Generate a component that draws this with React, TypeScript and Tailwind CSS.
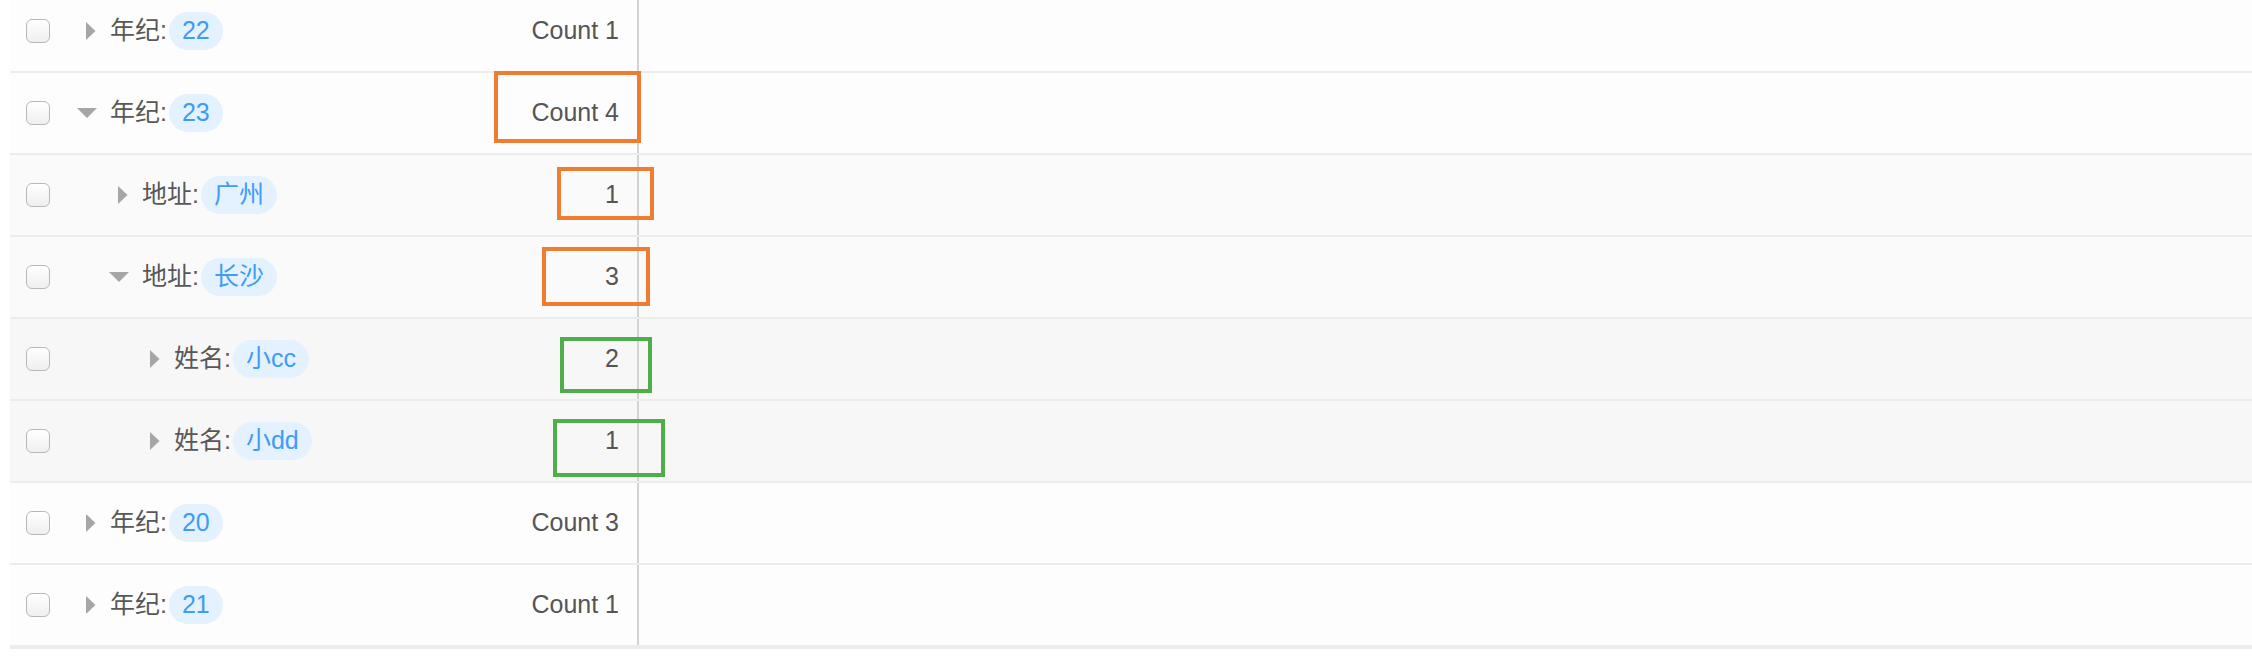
import React from 'react';

type Row = {
    level: number;
    label: string;
    value: string;
    count: string;
    open: boolean;
};

const rows: Row[] = [
    { level: 0, label: '年纪', value: '22', count: 'Count 1', open: false },
    { level: 0, label: '年纪', value: '23', count: 'Count 4', open: true },
    { level: 1, label: '地址', value: '广州', count: '1', open: false },
    { level: 1, label: '地址', value: '长沙', count: '3', open: true },
    { level: 2, label: '姓名', value: '小cc', count: '2', open: false },
    { level: 2, label: '姓名', value: '小dd', count: '1', open: false },
    { level: 0, label: '年纪', value: '20', count: 'Count 3', open: false },
    { level: 0, label: '年纪', value: '21', count: 'Count 1', open: false },
];

const rowBg = ['bg-[#fdfdfd]', 'bg-[#fafafa]', 'bg-[#f7f7f7]'];
const indent = ['w-0', 'w-[32px]', 'w-[64px]'];

// annotation frames drawn over the count column
const marks = [
    { cls: 'left-[494px] top-[71px] w-[147px] h-[72px] border-[#ee7d31]' },
    { cls: 'left-[557px] top-[167px] w-[97px] h-[53px] border-[#ee7d31]' },
    { cls: 'left-[542px] top-[247px] w-[108px] h-[59px] border-[#ee7d31]' },
    { cls: 'left-[560px] top-[337px] w-[92px] h-[56px] border-[#4fae4a]' },
    { cls: 'left-[553px] top-[419px] w-[112px] h-[58px] border-[#4fae4a]' },
];

const Arrow: React.FC<{ open: boolean }> = ({ open }) => (
    <div className="w-[20px] h-[20px] flex items-center">
        {open ? (
            <svg width="20" height="10" viewBox="0 0 20 10">
                <polygon points="0,0 20,0 10,10" fill="#a6a6a6" />
            </svg>
        ) : (
            <svg width="10" height="18" viewBox="0 0 10 18" className="ml-[9px]">
                <polygon points="0,0 9.5,9 0,18" fill="#a6a6a6" />
            </svg>
        )}
    </div>
);

const App: React.FC = () => {
    return (
        <div
            className="relative w-full h-[662px] bg-white overflow-hidden"
            style={{ fontFamily: "'Liberation Sans', 'Noto Sans CJK SC', sans-serif" }}
        >
            <div className="ml-[10px] -mt-[9px] border-b-2 border-[#ececec]">
                {rows.map((r, i) => (
                    <div key={i} className={`flex h-[82px] border-b-2 border-[#ececec] ${rowBg[r.level]}`}>
                        <div className="w-[629px] shrink-0 flex items-center border-r-2 border-[#d3d3d3]">
                            <div className="ml-[16px] w-[24px] h-[24px] rounded-[6px] border border-[#b8b8b8] bg-gradient-to-b from-white to-[#efefef]" />
                            <div className={`shrink-0 ${indent[r.level]}`} />
                            <div className="ml-[27px]">
                                <Arrow open={r.open} />
                            </div>
                            <span className="ml-[13px] text-[25px] text-[#585858]">{r.label}:</span>
                            <span className="ml-[2px] h-[38px] px-[13px] flex items-center rounded-full bg-[#e4f1ff] text-[25px] text-[#3e9bf6]">
                                {r.value}
                            </span>
                            <span className="ml-auto pr-[18px] text-[25px] text-[#555555]">{r.count}</span>
                        </div>
                        <div className="flex-1" />
                    </div>
                ))}
            </div>

            {marks.map((m, i) => (
                <div key={i} className={`absolute border-[4px] ${m.cls}`} />
            ))}
        </div>
    );
};

export default App;
